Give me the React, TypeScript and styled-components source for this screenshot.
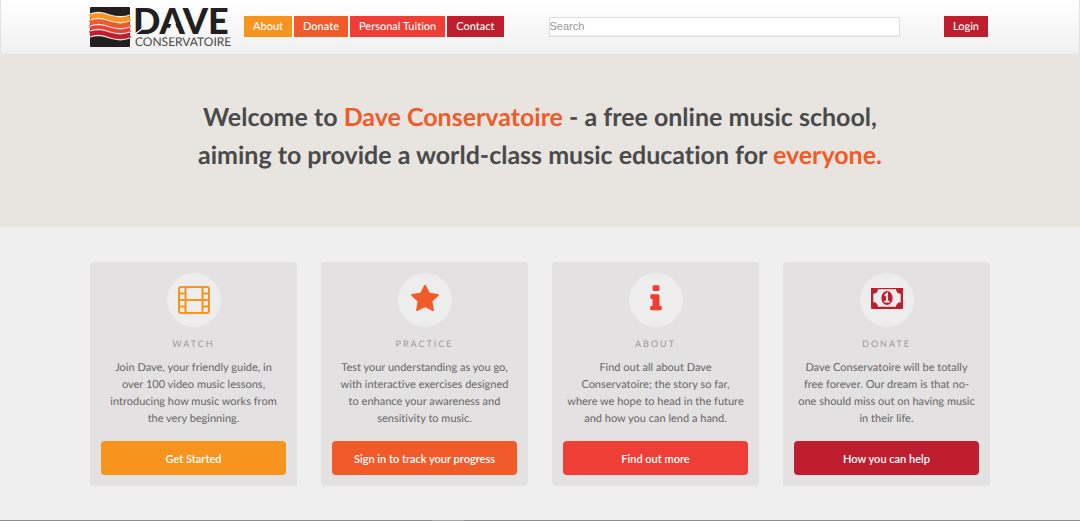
import React from 'react';
import styled, { createGlobalStyle } from 'styled-components';

const palette = {
  amber: '#f7941e',
  orange: '#f15a29',
  red: '#ef3e36',
  crimson: '#be1e2d',
};

const GlobalStyle = createGlobalStyle`
  *, *::before, *::after { box-sizing: border-box; }
  body {
    margin: 0;
    background: #efefef;
    color: #666;
    font-family: Lato, 'Liberation Sans', sans-serif;
    font-size: 11px;
    font-variant-ligatures: none;
    text-rendering: geometricPrecision;
  }
`;

const Page = styled.div`
  display: flex;
  flex-direction: column;
  min-height: 100vh;
`;

const Header = styled.header`
  border: 1px solid #e2e2e2;
  border-top: 0;
  border-radius: 0 0 3px 3px;
  background: linear-gradient(#ffffff, #f0f0f0);
`;

const Container = styled.div`
  width: 100%;
  max-width: 900px;
  margin: 0 auto;
`;

const Bar = styled(Container)`
  display: flex;
  align-items: center;
  height: 54px;
  padding-bottom: 1px;
`;

const LogoLink = styled.a`
  display: block;
  flex: none;
  margin-right: 12px;
  svg { display: block; overflow: visible; }
`;

const Nav = styled.nav`
  display: flex;
  flex: none;
  gap: 2px;
`;

const NavLink = styled.a<{ $color: string }>`
  padding: 0 9px;
  background: ${(p) => p.$color};
  color: #fff;
  font-size: 11px;
  font-weight: 500;
  line-height: 21px;
  text-decoration: none;
`;

const SearchForm = styled.form`
  display: flex;
  flex: 1;
  margin: 0 44px 0 45px;
`;

const SearchInput = styled.input`
  width: 100%;
  height: 20px;
  padding: 0 0 2px;
  border: 1px solid #ddd;
  border-radius: 0;
  background: #fff;
  box-shadow: inset 0 -1px 0 #eee;
  font-family: 'Liberation Sans', sans-serif;
  font-size: 11px;
  &::placeholder { color: #999; opacity: 1; }
`;

const LoginLink = styled(NavLink)`
  flex: none;
  margin-right: 2px;
`;

const Hero = styled.section`
  padding: 43px 20px 53px;
  background: #e8e5e0;
`;

const HeroTitle = styled.h1`
  margin: 0;
  color: #4a4a4a;
  font-size: 25px;
  font-weight: 700;
  line-height: 38px;
  text-align: center;
`;

const Line = styled.span`
  display: block;
`;

const Accent = styled.span`
  color: ${palette.orange};
`;

const Main = styled.main`
  flex: 1;
  padding: 35px 0 33px;
`;

const Cards = styled(Container)`
  display: grid;
  grid-template-columns: repeat(4, 1fr);
  gap: 24px;
`;

const Card = styled.article`
  display: flex;
  flex-direction: column;
  align-items: center;
  padding: 11px;
  border-radius: 4px;
  background: #e3e1e2;
  text-align: center;
`;

const IconDisc = styled.div`
  display: flex;
  align-items: center;
  justify-content: center;
  width: 54px;
  height: 54px;
  border-radius: 50%;
  background: #ededed;
`;

const CardTitle = styled.h2`
  margin: 8px 0 7px;
  color: #999;
  font-size: 9px;
  font-weight: 400;
  letter-spacing: 2px;
  line-height: 17px;
  text-transform: uppercase;
`;

const CardText = styled.p`
  margin: 0 0 14px;
  padding: 0 3px;
  line-height: 17px;
`;

const CardButton = styled.button<{ $color: string }>`
  width: 100%;
  height: 34px;
  margin-top: auto;
  border: 0;
  border-radius: 4px;
  background: ${(p) => p.$color};
  color: #fff;
  font: 600 11px Lato, 'Liberation Sans', sans-serif;
`;

const Footer = styled.footer`
  height: 1px;
  background: linear-gradient(90deg, #8c8c8c 40%, #a6a6a6 40%, #a6a6a6 43%, #8c8c8c 43%);
`;

const wave = (y: number) => `M0 ${y} C8 ${y - 3} 14 ${y - 1} 20 ${y + 1} S32 ${y + 4} 40 ${y + 1}`;

const Logo = () => (
  <svg width="142" height="40" viewBox="0 0 142 40" role="img" aria-label="Dave Conservatoire">
    <rect width="40" height="40" rx="1" fill="#231f20" />
    <g fill="none" strokeWidth="6">
      <path d={wave(10)} stroke={palette.amber} />
      <path d={wave(16)} stroke={palette.orange} />
      <path d={wave(21)} stroke={palette.red} />
      <path d={wave(27)} stroke={palette.crimson} />
    </g>
    <g fill="none" stroke="#f1e4de" strokeWidth="1.300">
      <path d={wave(7)} />
      <path d={wave(13)} />
      <path d={wave(19)} />
      <path d={wave(24)} />
      <path d={wave(30)} />
    </g>
    <text x="43" y="27" fill="#231f20" fontFamily="Lato, sans-serif" fontSize="36" fontWeight="900">DAVE</text>
    <path d="M83.500 11l5.500 16.500h-11.500z" fill="#f8f8f8" />
    <path d="M44.500 27.500l8-6" stroke="#f8f8f8" strokeWidth="1.500" />
    <text x="45" y="39" fill="#4a4a4a" fontFamily="Lato, sans-serif" fontSize="12">CONSERVATOIRE</text>
  </svg>
);

const FilmIcon = () => (
  <svg width="32" height="28" viewBox="0 0 32 28" fill="none" stroke={palette.amber} strokeWidth="2">
    <rect x="1" y="1" width="30" height="26" rx="2" />
    <path d="M7.500 1v26M24.500 1v26M7.500 14h17M1 7.500h6.500M1 14h6.500M1 20.500h6.500M24.500 7.500H31M24.500 14H31M24.500 20.500H31" />
  </svg>
);

const StarIcon = () => (
  <svg width="30" height="30" viewBox="0 60 1792 1792" fill={palette.orange}>
    <path d="M1728 647q0 22-26 48l-363 354 86 500q1 7 1 20 0 21-10.5 35.5t-30.5 14.5q-19 0-40-12l-449-236-449 236q-22 12-40 12-21 0-31.5-14.5t-10.5-35.5q0-6 2-20l86-500-364-354q-25-27-25-48 0-37 56-46l502-73 225-455q19-41 49-41t49 41l225 455 502 73q56 9 56 46z" />
  </svg>
);

const InfoIcon = () => (
  <svg width="32" height="32" viewBox="0 60 1792 1792" fill={palette.red}>
    <path d="M1216 1344v128q0 26-19 45t-45 19h-512q-26 0-45-19t-19-45v-128q0-26 19-45t45-19h64v-384h-64q-26 0-45-19t-19-45v-128q0-26 19-45t45-19h384q26 0 45 19t19 45v576h64q26 0 45 19t19 45zm-128-1152v192q0 26-19 45t-45 19h-256q-26 0-45-19t-19-45v-192q0-26 19-45t45-19h256q26 0 45 19t19 45z" />
  </svg>
);

const MoneyIcon = () => (
  <svg width="32" height="24" viewBox="0 1 32 24">
    <rect width="32" height="22" rx="1" fill={palette.crimson} />
    <path d="M7 2.300h18a4.500 4.500 0 0 0 4.700 4.500v8.400a4.500 4.500 0 0 0-4.700 4.500H7a4.500 4.500 0 0 0-4.700-4.500V6.800A4.500 4.500 0 0 0 7 2.300z" fill="#ededed" />
    <ellipse cx="16" cy="11" rx="5.600" ry="7" fill={palette.crimson} />
    <path d="M13.700 8.700l2.300-2v8M13.200 14.700h5.600" fill="none" stroke="#ededed" strokeWidth="1.800" />
  </svg>
);

const navItems = [
  { label: 'About', color: palette.amber },
  { label: 'Donate', color: palette.orange },
  { label: 'Personal Tuition', color: palette.red },
  { label: 'Contact', color: palette.crimson },
];

const cards = [
  {
    title: 'Watch',
    Icon: FilmIcon,
    color: palette.amber,
    text: 'Join Dave, your friendly guide, in over 100 video music lessons, introducing how music works from the very beginning.',
    action: 'Get Started',
  },
  {
    title: 'Practice',
    Icon: StarIcon,
    color: palette.orange,
    text: 'Test your understanding as you go, with interactive exercises designed to enhance your awareness and sensitivity to music.',
    action: 'Sign in to track your progress',
  },
  {
    title: 'About',
    Icon: InfoIcon,
    color: palette.red,
    text: 'Find out all about Dave Conservatoire; the story so far, where we hope to head in the future and how you can lend a hand.',
    action: 'Find out more',
  },
  {
    title: 'Donate',
    Icon: MoneyIcon,
    color: palette.crimson,
    text: 'Dave Conservatoire will be totally free forever. Our dream is that no-one should miss out on having music in their life.',
    action: 'How you can help',
  },
];

export default function App() {
  return (
    <Page>
      <GlobalStyle />
      <Header>
        <Bar>
          <LogoLink href="#"><Logo /></LogoLink>
          <Nav>
            {navItems.map((item) => (
              <NavLink key={item.label} href="#" $color={item.color}>{item.label}</NavLink>
            ))}
          </Nav>
          <SearchForm role="search">
            <SearchInput type="text" placeholder="Search" aria-label="Search" />
          </SearchForm>
          <LoginLink href="#" $color={palette.crimson}>Login</LoginLink>
        </Bar>
      </Header>
      <Hero>
        <HeroTitle>
          <Line>Welcome to <Accent>Dave Conservatoire</Accent> - a free online music school,</Line>
          <Line>aiming to provide a world-class music education for <Accent>everyone.</Accent></Line>
        </HeroTitle>
      </Hero>
      <Main>
        <Cards>
          {cards.map(({ title, Icon, color, text, action }) => (
            <Card key={title}>
              <IconDisc><Icon /></IconDisc>
              <CardTitle>{title}</CardTitle>
              <CardText>{text}</CardText>
              <CardButton type="button" $color={color}>{action}</CardButton>
            </Card>
          ))}
        </Cards>
      </Main>
      <Footer />
    </Page>
  );
}
